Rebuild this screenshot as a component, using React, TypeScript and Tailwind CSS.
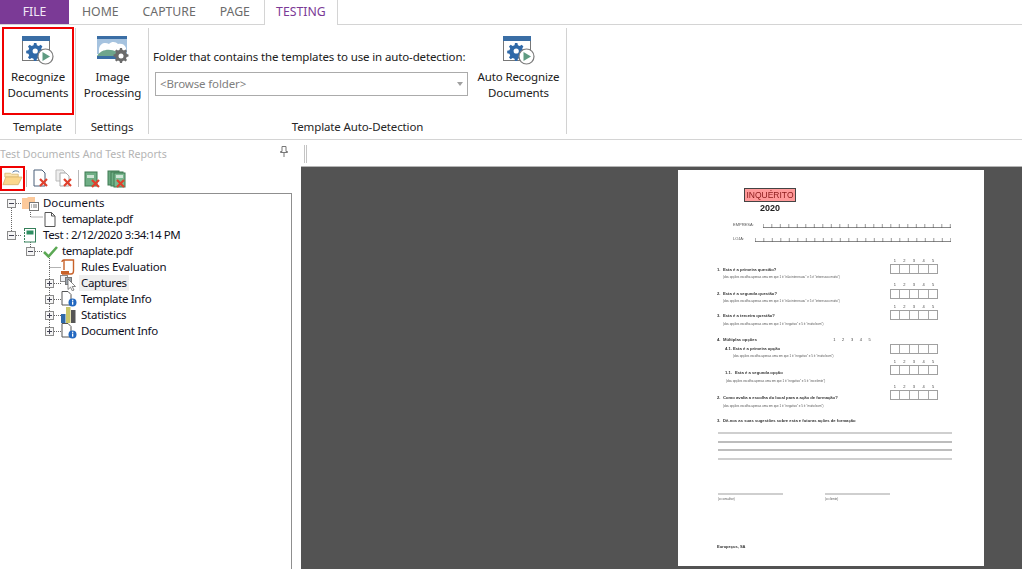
import React from 'react';

const RecognizeIcon = () => (
  <svg width="32" height="29" viewBox="0 0 32 29">
    <rect x="0.5" y="0.5" width="27" height="24" fill="#fff" stroke="#777" />
    <rect x="0" y="0" width="28" height="5" fill="#3a6ea5" />
    <path d="M12 7l2.400 0 .5 2.200 1.900.8 1.900-1.200 1.700 1.700-1.200 1.900.8 1.900 2.200.5v2.400l-2.200.5-.8 1.900 1.200 1.900-1.700 1.700-1.900-1.200-1.900.8-.5 2.200h-2.400l-.5-2.200-1.900-.8-1.900 1.200-1.700-1.700 1.200-1.900-.8-1.900-2.200-.5v-2.400l2.200-.5.8-1.900-1.200-1.900 1.700-1.700 1.900 1.200 1.900-.8z" fill="#2f69a8" />
    <circle cx="13.200" cy="15" r="2.600" fill="#fff" />
    <circle cx="23.500" cy="20.500" r="7.500" fill="#fff" stroke="#7c7c7c" strokeWidth="1.200" />
    <path d="M20.500 16l7.500 4.500-7.500 4.500z" fill="#5f9b82" />
  </svg>
);

const ImageProcessingIcon = () => (
  <svg width="32" height="28" viewBox="0 0 32 28">
    <rect x="0" y="0" width="30" height="23" fill="#fff" />
    <rect x="0" y="0" width="30" height="3" fill="#3a6ea5" />
    <path d="M0 3h30v15H0z" fill="#a6c3df" />
    <path d="M2 13c1-6 6-7 10-5 3-3 7-2 9 0 3-1 7 0 8 4v6H2z" fill="#fff" />
    <path d="M0 20c4-7 13-8 20-4l4 4z" fill="#6ea58c" />
    <rect x="0" y="20" width="24" height="3" fill="#3a6ea5" />
    <path d="M23 12h2l.4 1.800 1.600.7 1.600-1 1.400 1.400-1 1.600.7 1.600 1.800.4v2l-1.800.4-.7 1.600 1 1.600-1.400 1.400-1.600-1-1.600.7-.4 1.800h-2l-.4-1.800-1.600-.7-1.600 1-1.400-1.400 1-1.600-.7-1.600-1.800-.4v-2l1.800-.4.7-1.600-1-1.600 1.400-1.400 1.600 1 1.600-.7z" fill="#6b6b6b" />
    <circle cx="24" cy="20" r="2.500" fill="#fff" />
  </svg>
);

const RedX = ({ x, y }: { x: number; y: number }) => (
  <path d={`M${x} ${y}l7 7m0-7l-7 7`} stroke="#e0402c" strokeWidth="2.200" fill="none" />
);

const FolderOpenIcon = () => (
  <svg width="22" height="18" viewBox="0 0 22 18">
    <path d="M3 4h6l1 1h7v3H3z" fill="#fbe3ae" stroke="#d3b26a" strokeWidth=".8" />
    <path d="M1 16l3-8h17l-4 8z" fill="#fbd78d" stroke="#d3b26a" strokeWidth=".8" />
    <path d="M11 3c2-2 5-2 7 0" fill="none" stroke="#4b6e9a" strokeWidth="1" />
  </svg>
);

const DocXIcon = ({ grey = false }: { grey?: boolean }) => (
  <svg width="18" height="19" viewBox="0 0 18 19">
    {grey && <path d="M1 1h7l2 2v9H1z" fill="#eee" stroke="#bbb" />}
    <path d={grey ? 'M5 4h6l3 3v10H5z' : 'M2 1h8l3 3v13H2z'} fill="#fff" stroke={grey ? '#aaa' : '#4b5f78'} />
    <RedX x={grey ? 9 : 8} y={10} />
  </svg>
);

const BookXIcon = ({ double = false }: { double?: boolean }) => (
  <svg width="19" height="18" viewBox="0 0 19 18">
    {double && <rect x="1" y="1" width="11" height="14" fill="#6aa880" stroke="#3f7a52" />}
    <rect x={double ? 4 : 1} y="2" width="12" height="14" fill="#6fae85" stroke="#3f7a52" />
    {double && <rect x="7" y="3" width="11" height="14" fill="#7ab990" stroke="#3f7a52" />}
    <rect x={double ? 9 : 3} y="5" width="7" height="3" fill="#cfe4d6" />
    <RedX x={double ? 10 : 8} y={10} />
  </svg>
);

const FileIcon = () => (
  <svg width="12" height="15" viewBox="0 0 12 15">
    <path d="M1 .5h6.500l3.500 3.500v10.500H1z" fill="#fff" stroke="#555" />
    <path d="M7.500.5v3.500H11" fill="none" stroke="#555" />
  </svg>
);

const InfoFileIcon = () => (
  <svg width="16" height="16" viewBox="0 0 16 16">
    <path d="M1 .5h6l3 3v10.500H1z" fill="#fff" stroke="#555" />
    <circle cx="11.500" cy="11.500" r="4" fill="#2268c0" />
    <rect x="11" y="10.500" width="1.300" height="3.200" fill="#fff" />
    <rect x="11" y="8.700" width="1.300" height="1.200" fill="#fff" />
  </svg>
);

const FolderListIcon = () => (
  <svg width="17" height="15" viewBox="0 0 17 15">
    <path d="M0 2h5l1-1h7v12H0z" fill="#fcc99a" />
    <rect x="7.500" y="6.500" width="9" height="8" fill="#fff" stroke="#777" />
    <path d="M9 9h1m1 0h4M9 11h1m1 0h4" stroke="#777" />
  </svg>
);

const TestIcon = () => (
  <svg width="14" height="15" viewBox="0 0 14 15">
    <rect x="1.500" y=".5" width="11" height="13.500" fill="#fff" stroke="#35805a" />
    <rect x="3.500" y="2.500" width="7" height="4" fill="#2f8f62" />
    <path d="M1.500 3v1M1.500 6v1M1.500 9v1M1.500 12v1" stroke="#fff" />
  </svg>
);

const CheckIcon = () => (
  <svg width="15" height="13" viewBox="0 0 15 13">
    <path d="M1 7l4.500 4.500L14 2" fill="none" stroke="#5ba854" strokeWidth="2.600" />
  </svg>
);

const RulesIcon = () => (
  <svg width="14" height="16" viewBox="0 0 14 16">
    <path d="M3 1h9.500v11c0 2-1 3-2.500 3H1" fill="#fff" stroke="#c8622a" strokeWidth="1.400" />
    <path d="M3 1c-1.500 0-2 1-2 2M3 1v10" fill="none" stroke="#c8622a" strokeWidth="1.400" />
    <rect x="0" y="12" width="8" height="3" fill="#c8622a" />
  </svg>
);

const CapturesIcon = () => (
  <svg width="17" height="16" viewBox="0 0 17 16">
    <rect x=".5" y=".5" width="7" height="6" fill="#eef1f5" stroke="#8a8a8a" />
    <rect x="5.500" y="2.500" width="6" height="7" fill="#9aa3ad" stroke="#777" />
    <path d="M8 4v10.500l2.500-2.300 1.800 3.600 1.700-.8-1.800-3.500h3.300z" fill="#fff" stroke="#666" strokeWidth=".8" />
  </svg>
);

const StatsIcon = () => (
  <svg width="15" height="16" viewBox="0 0 15 16">
    <rect x="0" y="7" width="4.500" height="9" fill="#2f69a8" />
    <rect x="5" y="0" width="4.500" height="16" fill="#c9c668" />
    <rect x="10" y="3" width="4.500" height="13" fill="#555" />
  </svg>
);

const PinIcon = () => (
  <svg width="8" height="11" viewBox="0 0 8 11">
    <path d="M2 .5h4v5h1.500v1h-7v-1H2zM4 7v4" fill="none" stroke="#777" />
  </svg>
);

const Toggle = ({ open }: { open: boolean }) => (
  <div className="relative w-[9px] h-[9px] border border-[#8b8b8b] bg-[#f5f5f5] shrink-0">
    <div className="absolute left-[1px] right-[1px] top-[3px] h-[1px] bg-[#445]" />
    {!open && <div className="absolute top-[1px] bottom-[1px] left-[3px] w-[1px] bg-[#445]" />}
  </div>
);

const rows = [
  { pad: 'pl-[7px]', toggle: true, open: true, slot: 'w-[27px] pl-[6px]', icon: <FolderListIcon />, label: 'Documents', track: 'tracking-[-0.05px]' },
  { pad: 'pl-[44px]', toggle: false, open: false, slot: 'w-[18px]', icon: <FileIcon />, label: 'temaplate.pdf', track: 'tracking-[-0.43px]' },
  { pad: 'pl-[7px]', toggle: true, open: true, slot: 'w-[27px] pl-[7px]', icon: <TestIcon />, label: 'Test : 2/12/2020 3:34:14 PM', track: 'tracking-[-0.39px]' },
  { pad: 'pl-[26px]', toggle: true, open: true, slot: 'w-[27px] pl-[8px]', icon: <CheckIcon />, label: 'temaplate.pdf', track: 'tracking-[-0.43px]' },
  { pad: 'pl-[61px]', toggle: false, open: false, slot: 'w-[20px]', icon: <RulesIcon />, label: 'Rules Evaluation', track: 'tracking-[-0.2px]' },
  { pad: 'pl-[45px]', toggle: true, open: false, slot: 'w-[27px] pl-[6px]', icon: <CapturesIcon />, label: 'Captures', track: 'tracking-[-0.35px]', active: true },
  { pad: 'pl-[45px]', toggle: true, open: false, slot: 'w-[27px] pl-[7px]', icon: <InfoFileIcon />, label: 'Template Info', track: 'tracking-[-0.35px]' },
  { pad: 'pl-[45px]', toggle: true, open: false, slot: 'w-[27px] pl-[7px]', icon: <StatsIcon />, label: 'Statistics', track: 'tracking-[-0.25px]' },
  { pad: 'pl-[45px]', toggle: true, open: false, slot: 'w-[27px] pl-[7px]', icon: <InfoFileIcon />, label: 'Document Info', track: 'tracking-[-0.35px]' },
];

const TreeGuides = () => (
  <svg className="absolute left-0 top-0 pointer-events-none" width="90" height="150">
    <g stroke="#666" strokeDasharray="1 1" fill="none">
      <path d="M11.500 14v32M16 9.500h6" />
      <path d="M30.500 14v9h13M16 41.500h6M30.500 46v10" />
      <path d="M49.500 62v74M35 57.500h8" />
      <path d="M49.500 73.500h12M54 89.500h7M54 105.500h7M54 121.500h7M54 137.500h7" />
    </g>
  </svg>
);

const Tree = () => (
  <div className="relative flex-1 border-t border-r border-[#8f8f8f] pt-[1px] mr-[9px]">
    <TreeGuides />
    {rows.map((r) => (
      <div key={r.pad + r.label} className={`relative flex items-center h-4 ${r.pad}`}>
        {r.toggle && <Toggle open={r.open} />}
        <div className={`flex items-center h-4 shrink-0 ${r.slot}`}>{r.icon}</div>
        <span className={`text-[11.5px] leading-4 px-[2px] -ml-[2px] text-[#10101c] ${r.track} ${r.active ? 'bg-[#efefef]' : ''}`}>
          {r.label}
        </span>
      </div>
    ))}
  </div>
);

const Group = ({ width, label, children }: { width: string; label: string; children: React.ReactNode }) => (
  <div className={`flex flex-col shrink-0 h-[106px] border-r border-[#d2d2d2] ${width}`}>
    <div className="relative flex-1">{children}</div>
    <div className="h-[16px] mb-[-1px] text-center text-[11.5px] leading-4 tracking-[-0.13px] text-[#262626]">{label}</div>
  </div>
);

const BigButton = ({ icon, lines, boxed = false }: { icon: React.ReactNode; lines: string[]; boxed?: boolean }) => (
  <div className={`flex flex-col items-center ${boxed ? 'border-2 border-[#f00000] w-[72px] h-[88px] -mt-[1px] ml-[2px]' : ''}`}>
    <div className={`h-[28px] ${boxed ? 'mt-[7px]' : 'mt-[8px]'}`}>{icon}</div>
    <div className="mt-[5px] text-center text-[11.5px] leading-4 tracking-[-0.13px] text-[#202020] whitespace-nowrap">
      {lines.map((l) => (
        <div key={l}>{l}</div>
      ))}
    </div>
  </div>
);

const Ribbon = () => (
  <div className="flex h-[115px] border-b border-[#d4d4d4] pt-[3px]">
    <Group width="w-[76px]" label="Template">
      <BigButton boxed icon={<RecognizeIcon />} lines={['Recognize', 'Documents']} />
    </Group>
    <Group width="w-[73px]" label="Settings">
      <div className="pl-[1px]">
        <BigButton icon={<ImageProcessingIcon />} lines={['Image', 'Processing']} />
      </div>
    </Group>
    <Group width="w-[418px]" label="Template Auto-Detection">
      <div className="flex h-full">
        <div className="w-[322px] pl-[4px] pt-[21px]">
          <div className="text-[11.5px] leading-4 tracking-[-0.13px] text-[#202020] whitespace-nowrap">
            Folder that contains the templates to use in auto-detection:
          </div>
          <div className="mt-[7px] ml-[2px] flex items-center justify-between h-[24px] w-[313px] border border-[#ababab] pl-[4px] pr-[4px] text-[11.5px] tracking-[-0.13px] text-[#808080]">
            <span>&lt;Browse folder&gt;</span>
            <span className="w-0 h-0 border-x-[3px] border-x-transparent border-t-[4px] border-t-[#a0a0a0]" />
          </div>
        </div>
        <div className="flex-1">
          <BigButton icon={<RecognizeIcon />} lines={['Auto Recognize', 'Documents']} />
        </div>
      </div>
    </Group>
  </div>
);

const Tabs = () => (
  <div className="flex h-[25px] border-b border-[#d4d4d4] text-[12.25px]">
    <div className="flex items-center justify-center w-[69px] h-[24px] bg-[#7b3a96] text-[#f2e9f6]">FILE</div>
    <div className="ml-[13px] leading-6 text-[#6b6b6b]">HOME</div>
    <div className="ml-[24px] leading-6 text-[#6b6b6b]">CAPTURE</div>
    <div className="ml-[24px] leading-6 text-[#6b6b6b]">PAGE</div>
    <div className="ml-[14px] flex justify-center w-[74px] h-[25px] leading-6 border-x border-[#d4d4d4] bg-white text-[#7b3a96]">
      TESTING
    </div>
  </div>
);

const Comb = ({ width }: { width: number }) => {
  const ticks = Array.from({ length: Math.round(width / 8.5) + 1 }, (_, i) => i * 8.5);
  return (
    <svg width={width} height="5" viewBox={`0 0 ${width} 5`}>
      <path d={`M0 4.500H${width}`} stroke="#555" strokeWidth=".7" />
      {ticks.map((x) => (
        <path key={x} d={`M${x + 0.3} 1V5`} stroke="#555" strokeWidth=".6" />
      ))}
    </svg>
  );
};

const ScaleNumbers = ({ className = '' }: { className?: string }) => (
  <div className={`flex justify-around h-[6px] text-[4px] leading-[6px] text-[#444] ${className}`}>
    {['1', '2', '3', '4', '5'].map((n) => (
      <span key={n}>{n}</span>
    ))}
  </div>
);

const ScaleBoxes = ({ className = '' }: { className?: string }) => (
  <div className={`flex h-[10px] border border-[#a0a0a0] ${className}`}>
    {[0, 1, 2, 3, 4].map((n) => (
      <div key={n} className="flex-1 border-l border-[#a8a8a8] first:border-l-0" />
    ))}
  </div>
);

const Question = ({ num, text, className = '', numWidth = 'w-[6px]' }: { num: string; text: string; className?: string; numWidth?: string }) => (
  <div className={`flex h-[6px] text-[4.200px] leading-[6px] font-bold text-[#333] whitespace-nowrap ${className}`}>
    <span className={numWidth}>{num}</span>
    <span>{text}</span>
  </div>
);

const Hint = ({ text, className = '' }: { text: string; className?: string }) => (
  <div className={`h-[6px] text-[3px] leading-[6px] text-[#555] whitespace-nowrap ${className}`}>{text}</div>
);

const DocumentPage = () => (
  <div className="flex flex-col w-[306px] h-[396px] bg-white ml-[377px] mt-[3px] font-['Liberation_Sans',sans-serif] blur-[0.35px]">
    {/* header */}
    <div className="h-[86px] pt-[18px]">
      <div className="ml-[66px] w-[52px] h-[14px] border border-[#444] bg-[#ff9a9a] text-[8.500px] leading-[12px] text-center text-[#8a1a1a]">
        INQUÉRITO
      </div>
      <div className="ml-[66px] w-[52px] text-center text-[9px] leading-[12px] font-bold text-[#222]">2020</div>
      <div className="flex items-end h-[10px] mt-[4px] ml-[55px]">
        <span className="w-[30px] text-[4px] leading-[6px] text-[#555]">EMPRESA:</span>
        <Comb width={188} />
      </div>
      <div className="flex items-end h-[10px] mt-[4px] ml-[55px]">
        <span className="w-[22px] text-[4px] leading-[6px] text-[#555]">LOJA:</span>
        <Comb width={196} />
      </div>
    </div>

    {/* questions and answer boxes */}
    <div className="flex justify-between h-[170px] pr-[46px]">
      <div className="pl-[39px] pt-[11px]">
        <Question num="1." text="Esta é a primeira questão?" />
        <Hint className="mt-[1px] ml-[6px]" text={'(dos opções escolha apenas uma em que 1 é "não interessou" e 5 é "interessou muito")'} />
        <Question className="mt-[11px]" num="2." text="Esta é a segunda questão?" />
        <Hint className="mt-[1px] ml-[6px]" text={'(dos opções escolha apenas uma em que 1 é "não interessou" e 5 é "interessou muito")'} />
        <Question className="mt-[9px]" num="3." text="Esta é a terceira questão?" />
        <Hint className="mt-[2px] ml-[6px]" text={'(dos opções escolha apenas uma em que 1 é "negativo" e 5 é "muito bom")'} />
        <div className="flex mt-[10px]">
          <Question className="w-[113px]" num="4." text="Múltiplas opções" />
          <ScaleNumbers className="w-[44px]" />
        </div>
        <Question className="mt-[3px] ml-[8px]" numWidth="w-[8px]" num="4.1." text="Esta é a primeira opção" />
        <Hint className="mt-[1px] ml-[16px]" text={'(dos opções escolha apenas uma em que 1 é "negativo" e 5 é "muito bom")'} />
        <Question className="mt-[11px] ml-[8px]" numWidth="w-[10px]" num="1.1." text="Esta é a segunda opção" />
        <Hint className="mt-[2px] ml-[9px]" text={'(das opções escolha apenas uma em que 1 é "negativo" e 5 é "excelente")'} />
        <Question className="mt-[11px]" num="2." text="Como avalia a escolha do local para a ação de formação?" />
        <Hint className="mt-[2px] ml-[6px]" text={'(dos opções escolha apenas uma em que 1 é "negativo" e 5 é "muito bom")'} />
        <Question className="mt-[9px]" num="3." text="Dê-nos as suas sugestões sobre esta e futuras ações de formação" />
      </div>
      <div className="w-[48px] pt-[2px]">
        <ScaleNumbers />
        <ScaleBoxes />
        <ScaleNumbers className="mt-[8px]" />
        <ScaleBoxes className="mt-[1px]" />
        <ScaleNumbers className="mt-[5px]" />
        <ScaleBoxes />
        <ScaleBoxes className="mt-[24px]" />
        <ScaleNumbers className="mt-[5px]" />
        <ScaleBoxes />
        <ScaleNumbers className="mt-[9px]" />
        <ScaleBoxes />
      </div>
    </div>

    {/* answer lines */}
    <div className="ml-[40px] w-[234px] mt-[6px]">
      <div className="h-[2px] bg-[#cfcfcf]" />
      <div className="h-[2px] mt-[7px] bg-[#bdbdbd]" />
      <div className="h-[2px] mt-[6px] bg-[#bdbdbd]" />
      <div className="h-[2px] mt-[7px] bg-[#cfcfcf]" />
    </div>

    {/* signatures */}
    <div className="flex ml-[40px] mt-[33px]">
      <div className="w-[107px]">
        <div className="w-[65px] h-[2px] bg-[#cfcfcf]" />
        <div className="text-[3px] leading-[8px] text-[#555]">(o consultor)</div>
      </div>
      <div>
        <div className="w-[65px] h-[2px] bg-[#cfcfcf]" />
        <div className="text-[3px] leading-[8px] text-[#555]">(o cliente)</div>
      </div>
    </div>

    <div className="ml-[39px] mt-[41px] text-[4px] leading-[6px] font-bold text-[#333]">Europeçus, SA</div>
  </div>
);

export default function App() {
  return (
    <div className="w-screen h-screen overflow-hidden bg-white font-['Noto_Sans',sans-serif]">
      <Tabs />
      <Ribbon />
      <div className="flex h-[429px]">
        {/* left panel */}
        <div className="flex flex-col w-[301px] shrink-0">
          <div className="flex items-center justify-between h-[23px] pt-[7px] pr-[13px] text-[10.600px] text-[#b4b4b4]">
            <span>Test Documents And Test Reports</span>
            <span className="-mt-[8px]">
              <PinIcon />
            </span>
          </div>
          <div className="flex items-center h-[30px] pt-[1px]">
            <div className="flex items-center justify-center w-[25px] h-[25px] border-2 border-[#f00000] -mt-[1px]">
              <FolderOpenIcon />
            </div>
            <div className="ml-[1px] w-[1px] h-[17px] bg-[#b9b9b9]" />
            <div className="ml-[5px]"><DocXIcon /></div>
            <div className="ml-[5px]"><DocXIcon grey /></div>
            <div className="ml-[5px] w-[1px] h-[17px] bg-[#b9b9b9]" />
            <div className="ml-[5px]"><BookXIcon /></div>
            <div className="ml-[4px]"><BookXIcon double /></div>
          </div>
          <Tree />
        </div>

        {/* viewer */}
        <div className="flex flex-col flex-1 min-w-0">
          <div className="flex h-[27px] pt-[5px] pl-[3px] gap-[1px] border-b border-[#b5b5b5]">
            <div className="w-[1px] h-[18px] bg-[#c4c4c4]" />
            <div className="w-[1px] h-[18px] bg-[#c4c4c4]" />
          </div>
          <div className="flex-1 bg-[#535353] overflow-hidden">
            <DocumentPage />
          </div>
        </div>
      </div>
    </div>
  );
}
